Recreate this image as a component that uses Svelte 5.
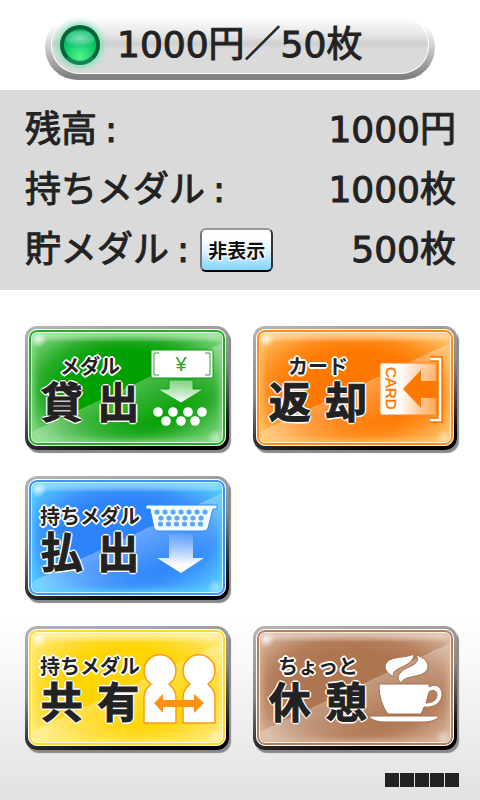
<script>
  let showSaved = $state(true)

  const balances = [
    { id: 'balance', label: '残高', value: '1000円' },
    { id: 'medals', label: '持ちメダル', value: '1000枚' },
    { id: 'saved', label: '貯メダル', value: '500枚', toggle: true },
  ]

  const actions = [
    { id: 'lend', small: 'メダル', large: '貸 出' },
    { id: 'return', small: 'カード', large: '返 却' },
    { id: 'payout', small: '持ちメダル', large: '払 出' },
    { id: 'share', small: '持ちメダル', large: '共 有' },
    { id: 'rest', small: 'ちょっと', large: '休 憩' },
  ]

  const balls = [[17, 78], [32, 78], [47, 78], [61, 78], [25, 87], [40, 87], [54, 87]]

  const holes = [
    ...[0, 1, 2, 3, 4, 5, 6].map((i) => [16 + i * 8, 28]),
    ...[0, 1, 2, 3, 4, 5].map((i) => [20 + i * 8, 34]),
    ...[0, 1, 2, 3, 4, 5].map((i) => [19.5 + i * 8, 40]),
  ]
</script>

<div class="screen">
  <header class="rate">
    <div class="rate-face">
      <span class="lamp" aria-hidden="true"></span>
      <span class="figure">1000円／50枚</span>
    </div>
  </header>

  <dl class="balances">
    {#each balances as row (row.id)}
      <div class="row">
        <dt class="figure"><span>{row.label}</span><span>:</span></dt>
        {#if row.toggle}
          <dd class="toggle-cell">
            <button class="toggle" onclick={() => (showSaved = !showSaved)}>
              {showSaved ? '非表示' : '表示'}
            </button>
          </dd>
        {/if}
        <dd class="figure value">{row.toggle && !showSaved ? '' : row.value}</dd>
      </div>
    {/each}
  </dl>

  <main class="actions">
    {#each actions as action (action.id)}
      <button class="action {action.id}">
        <span class="face">
          <span class="labels">
            <span class="small">{action.small}</span>
            <span class="large">{action.large}</span>
          </span>
          <svg class="icon" viewBox="0 0 80 108" aria-hidden="true">
            {#if action.id === 'lend'}
              <defs>
                <linearGradient id="lend-fade" x1="0" y1="0" x2="0" y2="1">
                  <stop offset="0" stop-color="#fff" stop-opacity="0.4" />
                  <stop offset="1" stop-color="#fff" />
                </linearGradient>
              </defs>
              <rect x="10" y="16" width="62" height="28" rx="1" fill="#fff" stroke="#0a9a10" />
              <path d="M18 19h-5v22h5M64 19h5v22h-5" fill="none" stroke="#2ba52c" />
              <text class="yen" x="40" y="37" text-anchor="middle">¥</text>
              <path d="M28 46h24v9h11L40 69 16 55h12z" fill="url(#lend-fade)" stroke="#1ca01f" stroke-width="1" />
              {#each balls as [x, y]}
                <circle cx={x} cy={y} r="4.8" fill="#fff" />
              {/each}
            {:else if action.id === 'return'}
              <defs>
                <linearGradient id="card-fade">
                  <stop offset="0.35" stop-color="#fff" />
                  <stop offset="1" stop-color="#fff" stop-opacity="0.25" />
                </linearGradient>
              </defs>
              <path d="M61 25h10v61H61" fill="none" stroke="#ff7800" stroke-width="6" />
              <path d="M61 25h10v61H61" fill="none" stroke="#fff" stroke-width="2.5" />
              <rect x="11" y="29" width="56" height="52" rx="2" fill="url(#card-fade)" stroke="#ff8a18" />
              <path d="M34 55 52 36v11h17v17H52v10z" fill="#ff7800" />
              <text class="card" transform="translate(17 33) rotate(90)">CARD</text>
            {:else if action.id === 'payout'}
              <defs>
                <linearGradient id="payout-fade" x1="0" y1="0" x2="0" y2="1">
                  <stop offset="0" stop-color="#fff" stop-opacity="0.1" />
                  <stop offset="0.8" stop-color="#fff" />
                </linearGradient>
              </defs>
              <path d="M5 21h71v4h-4l-5 19q-1 3-4 3H17q-3 0-4-3L9 25H5z" fill="#f2fbff" stroke="#2f8cf4" />
              {#each holes as [x, y]}
                <circle cx={x} cy={y} r="2.6" fill="#5ea8f5" />
              {/each}
              <path d="M28 50h24v24h11L40 89 16 74h12z" fill="url(#payout-fade)" />
            {:else if action.id === 'share'}
              {#each [0, 39] as x}
                <path
                  transform="translate({x} 0)"
                  d="M3 89V64c0-7 3-10 7-14A16 16 0 1 1 28 50c4 4 7 7 7 14v25z"
                  fill="#fff"
                  stroke="#ff9a0c"
                  stroke-width="1.5"
                />
              {/each}
              <path d="M13 69l9-9v6h31v-6l10 9-10 10v-6H22v6z" fill="#ff930f" />
            {:else}
              <g fill="#fff" stroke="#a5714e" stroke-width="1">
                <path d="M0 82h70c-2 4-8 6-17 6H17c-9 0-15-2-17-6z" />
                <path
                  fill-rule="evenodd"
                  d="M10 50h50v3c5-4 13-1 13 7 0 9-8 14-18 13l-3 7H19C13 72 10 62 10 50zM60 58l-3 11c6 0 11-3 11-8 0-5-5-6-8-3z"
                />
                <path d="M25 43c-6-3-12-9-7-15 5-6 20-4 27-8 0 8-8 11-14 14-6 3-8 5-6 9z" />
                <path d="M32 49c-6-5-2-11 6-15 9-4 13-7 9-13 11 3 16 12 8 18-7 5-19 2-23 10z" />
              </g>
            {/if}
          </svg>
        </span>
      </button>
    {/each}
  </main>

  <footer class="marks" aria-hidden="true">
    {#each Array(5) as _}
      <span></span>
    {/each}
  </footer>
</div>

<style>
  :global(body) {
    margin: 0;
  }

  .screen {
    box-sizing: border-box;
    min-height: 100vh;
    padding-top: 15px;
    background: linear-gradient(to top, #e2e2e2, #fff 180px);
    color: #222;
    font-family: 'DejaVu Sans', 'Noto Sans CJK JP', sans-serif;
  }

  .figure {
    font-size: 36px;
    line-height: 62px;
    -webkit-text-stroke: 1px #222;
  }

  .rate {
    margin: 0 45px 10px;
    padding: 2px 6px 6px;
    border-radius: 33px;
    background: linear-gradient(#fff 15%, #ccc 50%, #808080 95%);
  }

  .rate-face {
    display: flex;
    align-items: center;
    gap: 17px;
    height: 56px;
    padding-left: 8px;
    border: solid #fff;
    border-width: 0 1px 1px;
    border-radius: 29px;
    background: linear-gradient(#fff, #e2e2e2 35%, #cfcfcf 48%, #dadada 56%);
  }

  .lamp {
    box-sizing: border-box;
    width: 40px;
    height: 40px;
    border: 4px solid #07623b;
    border-bottom-color: #17825a;
    border-radius: 50%;
    background:
      radial-gradient(ellipse 15px 8px at 50% 30%, #7be3b4, #2fc880 95%, transparent),
      radial-gradient(circle at 50% 85%, #53f58b, #0bc865 50%, #0a9f58);
    box-shadow: 0 0 6px 2px #6fe5b0;
  }

  .balances {
    margin: 0;
    padding: 10px 24px 10px 25px;
    background: #dadada;
  }

  .row {
    display: flex;
    align-items: center;
    height: 60px;
  }

  .row dt {
    display: flex;
    gap: 8px;
  }

  .row dd {
    margin: 0;
  }

  .row .value {
    margin-left: auto;
  }

  .row .toggle-cell {
    margin-left: 11px;
  }

  .toggle {
    width: 73px;
    height: 44px;
    padding: 0;
    border: 2px solid #111;
    border-color: #999 #333 #000 #777;
    border-radius: 6px;
    background: linear-gradient(#fff 20%, #d9f1ff 55%, #7fd4ff);
    color: #111;
    font: bold 19px/28px 'Noto Sans CJK JP', sans-serif;
    text-shadow: 1px 1px #fff, -1px -1px #fff, 1px -1px #fff, -1px 1px #fff;
  }

  .actions {
    display: grid;
    grid-template-columns: 1fr 1fr;
    gap: 26px 24px;
    padding: 36px 23px 0 25px;
  }

  .action {
    --deep: #00a000;
    --mid: #28ac28;
    --light: #8cdc8c;
    height: 124px;
    padding: 3px 3px 4px;
    border: 0;
    border-radius: 12px;
    background: linear-gradient(170deg, #b5b5b5, #888 45%, #000 90%);
    box-shadow: 2px 3px 1px #888;
    color: #222;
    font-family: inherit;
  }

  .return {
    --deep: #ff7800;
    --mid: #ff8c1c;
    --light: #ffc66c;
  }

  .payout {
    grid-column: 1;
    --deep: #2c83fa;
    --mid: #3c94fb;
    --light: #58d2ff;
  }

  .share {
    grid-column: 1;
    --deep: #ffd400;
    --mid: #ffda28;
    --light: #ffec88;
  }

  .rest {
    --deep: #ad7550;
    --mid: #b67f5d;
    --light: #d8b89f;
  }

  .face {
    box-sizing: border-box;
    display: flex;
    align-items: center;
    justify-content: space-between;
    height: 100%;
    padding: 0 4px 0 10px;
    border: 1px solid #fff;
    border-radius: 9px;
    background:
      radial-gradient(circle at 8px 8px, #fff, transparent 10px),
      radial-gradient(circle at calc(100% - 8px) calc(100% - 6px), #ffffff99, transparent 10px),
      linear-gradient(#ffffff88 4px, #ffffff33 10px, transparent 12px),
      linear-gradient(155deg, transparent 50%, #ffffff48 50%, transparent 75%),
      radial-gradient(ellipse at center, var(--deep) 45%, var(--mid) 62%, var(--light) 92%);
    box-shadow: inset 0 0 0 2px var(--mid), inset 0 0 0 3px #ffffffaa, inset 0 0 7px 4px var(--light);
  }

  .labels {
    display: flex;
    flex-direction: column;
    align-items: center;
    width: 102px;
    padding-top: 6px;
    font-weight: bold;
    white-space: nowrap;
    text-shadow:
      2px 0 #fff, -2px 0 #fff, 0 2px #fff, 0 -2px #fff,
      1px 1px #fff, -1px 1px #fff, 1px -1px #fff, -1px -1px #fff;
  }

  .small {
    font-size: 20px;
    line-height: 26px;
  }

  .large {
    font-size: 42px;
    line-height: 48px;
    -webkit-text-stroke: 1px #222;
  }

  .icon {
    flex: none;
    width: 80px;
    height: 108px;
  }

  .yen {
    fill: #2ba52c;
    font: 20px 'Liberation Sans', sans-serif;
  }

  .card {
    fill: #ff7800;
    stroke: #ff7800;
    stroke-width: 0.5;
    font: 15px 'Liberation Sans', sans-serif;
  }

  .marks {
    display: flex;
    justify-content: flex-end;
    gap: 1px;
    padding: 23px 21px 13px;
  }

  .marks span {
    width: 14px;
    height: 14px;
    background: #222;
  }
</style>
